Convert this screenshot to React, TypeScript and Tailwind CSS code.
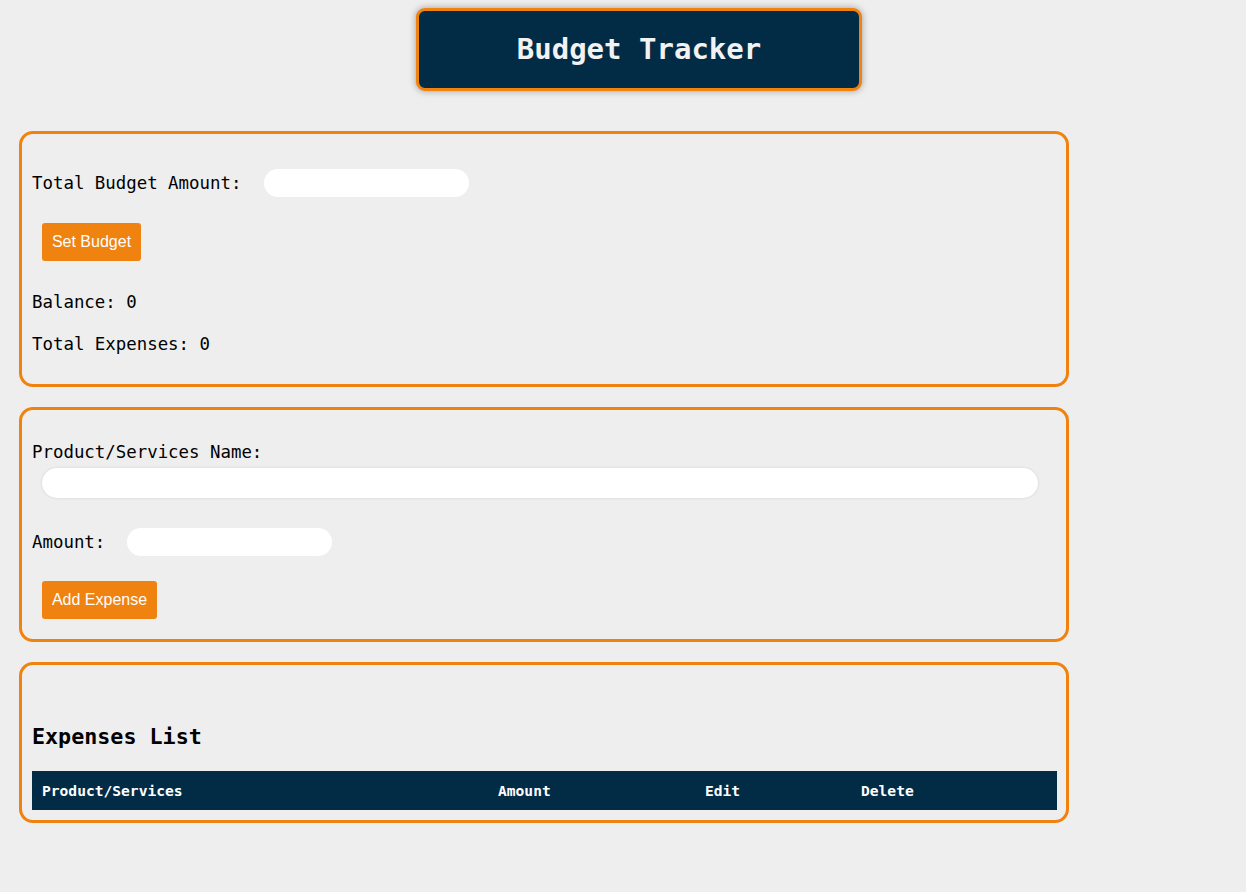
import React from "react";

const mono = { fontFamily: '"DejaVu Sans Mono", "Liberation Mono", monospace' };

export default function App() {
  return (
    <div className="min-h-[892px] w-full bg-[#eeeeee] pt-[8px] pb-10" style={mono}>
      <div className="ml-[416px] flex h-[83px] w-[446px] items-center justify-center rounded-[9px] border-[3px] border-[#f0820f] bg-[#022c46] shadow-[0_0_7px_rgba(0,0,0,0.35)]">
        <h1 className="text-[29px] font-bold leading-none text-[#f2f2f2]">Budget Tracker</h1>
      </div>

      <div className="ml-[19px] mt-[40px] flex w-[1050px] flex-col gap-[20px]">
        {/* Card 1 */}
        <div className="flex flex-col rounded-[14px] border-[3px] border-[#f0820f] px-[10px] pt-[35px] pb-[28px] text-[17.4px] leading-[24px] text-black">
          <div className="flex items-center">
            <span>Total Budget Amount:</span>
            <div className="ml-[23px] h-[28px] w-[205px] rounded-full bg-white" />
          </div>
          <button
            className="ml-[10px] mt-[26px] h-[38px] w-[99px] rounded-[3px] bg-[#f0820f] text-[16px] text-white"
            style={{ fontFamily: '"Liberation Sans", Arial, sans-serif' }}
          >
            Set Budget
          </button>
          <div className="mt-[29px]">Balance: 0</div>
          <div className="mt-[18px]">Total Expenses: 0</div>
        </div>

        {/* Card 2 */}
        <div className="flex flex-col rounded-[14px] border-[3px] border-[#f0820f] px-[10px] pt-[30px] pb-[20px] text-[17.4px] leading-[24px] text-black">
          <div>Product/Services Name:</div>
          <div className="ml-[10px] mt-[4px] h-[30px] w-[996px] rounded-full bg-white shadow-[0_0_3px_rgba(0,0,0,0.12)]" />
          <div className="mt-[30px] flex items-center">
            <span>Amount:</span>
            <div className="ml-[22px] h-[28px] w-[205px] rounded-full bg-white" />
          </div>
          <button
            className="ml-[10px] mt-[25px] h-[38px] w-[115px] rounded-[3px] bg-[#f0820f] text-[16px] text-white"
            style={{ fontFamily: '"Liberation Sans", Arial, sans-serif' }}
          >
            Add Expense
          </button>
        </div>

        {/* Card 3 */}
        <div className="flex flex-col rounded-[14px] border-[3px] border-[#f0820f] pl-[10px] pr-[9px] pt-[58px] pb-[10px] text-black">
          <h2 className="text-[21.7px] font-bold leading-[28px]">Expenses List</h2>
          <div className="mt-[20px] grid h-[39px] grid-cols-[456px_207px_156px_206px] items-center bg-[#022c46] text-[14.6px] font-bold text-white">
            <div className="pl-[10px]">Product/Services</div>
            <div className="pl-[10px]">Amount</div>
            <div className="pl-[10px]">Edit</div>
            <div className="pl-[10px]">Delete</div>
          </div>
        </div>
      </div>
    </div>
  );
}
